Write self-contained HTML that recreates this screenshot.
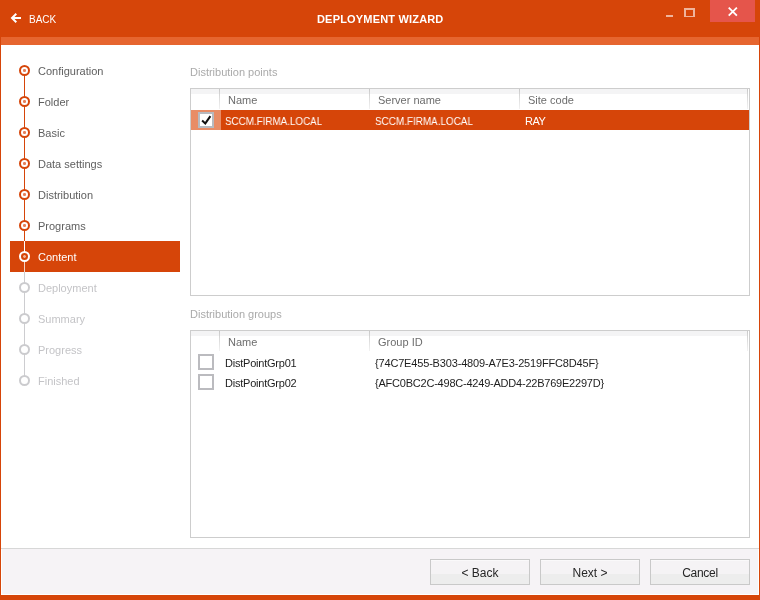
<!DOCTYPE html>
<html><head><meta charset="utf-8">
<style>
*{margin:0;padding:0;box-sizing:border-box}
html,body{width:760px;height:600px;overflow:hidden;background:#fff}
body{-webkit-font-smoothing:antialiased;position:relative;font-family:"Liberation Sans",sans-serif;font-size:11px}
.a{position:absolute;white-space:nowrap}
#frame{position:absolute;left:0;top:0;width:760px;height:600px;background:#D64509}
#white{position:absolute;left:1px;top:45px;width:758px;height:550px;background:#fff}
#band{position:absolute;left:1px;top:37px;width:758px;height:8px;background:#E6652F}
.t{position:absolute;white-space:nowrap;line-height:15px;will-change:transform}
.nav{color:#606060}
.dis{color:#C4C4C7}
.dot{position:absolute;left:19px;width:11px;height:11px;border-radius:50%;border:2px solid #D64509;background:#fff}
.dot{background:radial-gradient(circle at 50% 50%,#E6805A 0,#E6805A 1.2px,#fff 1.9px)}
.dot.d{border-color:#CBCBCE}
.dot.d{background:#fff}
.tbl{position:absolute;left:190px;width:560px;height:208px;border:1px solid #CDCDCD;background:#fff}
.hdr{position:absolute;left:0;top:0;width:557px;height:21px;background:linear-gradient(#F4F4F5 0,#F4F4F5 5px,#fff 5px)}
.sep{position:absolute;top:0;width:1px;height:20px;background:linear-gradient(#C9C9C9,#F2F2F2)}
.cb{position:absolute;width:16px;height:16px;border:2px solid #BBBBBF;background:#fff}
.btn{will-change:transform;position:absolute;top:559px;width:100px;height:26px;border:1px solid #C9C9C9;background:linear-gradient(#FAF9FA 0,#FAF9FA 1px,#F5F3F5 1px,#F5F3F5 14px,#EDEDED 14px);color:#262626;text-align:center;line-height:25px;padding-top:1px;font-size:12px}
</style></head><body>
<div id="frame"></div>
<div id="band"></div>
<div id="white"></div>
<!-- footer -->
<div class="a" style="left:1px;top:548px;width:758px;height:1px;background:#D7D7D7"></div>
<div class="a" style="left:2px;top:549px;width:756px;height:45px;background:#F6F3F6"></div>

<!-- header -->
<svg class="a" style="left:10px;top:12px" width="12" height="12" viewBox="0 0 12 12"><path d="M2 6H11M6.3 1.7L2 6L6.3 10.3" stroke="#fff" stroke-width="2" fill="none"/></svg>
<div class="t" style="left:29px;top:12px;color:#fff;font-size:10px">BACK</div>
<div class="t" style="left:317px;top:12px;color:#fff;font-weight:bold;letter-spacing:0.18px">DEPLOYMENT WIZARD</div>
<div class="a" style="left:666px;top:15px;width:7px;height:2px;background:rgba(255,255,255,.6)"></div>
<div class="a" style="left:684px;top:8px;width:11px;height:9px;border:2px solid rgba(255,255,255,.6);border-bottom-width:1px"></div>
<div class="a" style="left:710px;top:0;width:45px;height:22px;background:#E5554B"></div>
<svg class="a" style="left:727px;top:6px" width="12" height="11" viewBox="0 0 12 11"><path d="M1.7 1.6L9.9 9.7M9.9 1.6L1.7 9.7" stroke="#fff" stroke-width="1.8" fill="none"/></svg>

<!-- sidebar -->
<div class="a" style="left:10px;top:241px;width:170px;height:31px;background:#D64509"></div>
<div class="a" style="left:24px;top:70px;width:1px;height:186px;background:#D64509"></div>
<div class="a" style="left:24px;top:241px;width:1px;height:16px;background:#fff"></div>
<div class="a" style="left:24px;top:257px;width:1px;height:124px;background:#CDCDD0"></div>
<div class="a" style="left:24px;top:257px;width:1px;height:15px;background:#F6D2C2"></div>

<div class="dot" style="top:65px"></div>
<div class="dot" style="top:96px"></div>
<div class="dot" style="top:127px"></div>
<div class="dot" style="top:158px"></div>
<div class="dot" style="top:189px"></div>
<div class="dot" style="top:220px"></div>
<div class="dot" style="top:251px;border-color:#fff;background:radial-gradient(circle at 50% 50%,#F0B294 0,#F0B294 1px,#D64509 1.7px)"></div>
<div class="dot d" style="top:282px"></div>
<div class="dot d" style="top:313px"></div>
<div class="dot d" style="top:344px"></div>
<div class="dot d" style="top:375px"></div>

<div class="t nav" style="left:38px;top:64px">Configuration</div>
<div class="t nav" style="left:38px;top:95px">Folder</div>
<div class="t nav" style="left:38px;top:126px">Basic</div>
<div class="t nav" style="left:38px;top:157px">Data settings</div>
<div class="t nav" style="left:38px;top:188px">Distribution</div>
<div class="t nav" style="left:38px;top:219px">Programs</div>
<div class="t" style="left:38px;top:250px;color:#fff">Content</div>
<div class="t dis" style="left:38px;top:281px">Deployment</div>
<div class="t dis" style="left:38px;top:312px">Summary</div>
<div class="t dis" style="left:38px;top:343px">Progress</div>
<div class="t dis" style="left:38px;top:374px">Finished</div>

<!-- distribution points -->
<div class="t" style="left:190px;top:65px;color:#AAAAAA">Distribution points</div>
<div class="tbl" style="top:88px">
  <div class="hdr"></div>
  <div class="sep" style="left:28px"></div>
  <div class="sep" style="left:178px"></div>
  <div class="sep" style="left:328px"></div>
  <div class="sep" style="left:556px"></div>
  <div class="t" style="left:37px;top:4px;color:#6D6D6D">Name</div>
  <div class="t" style="left:187px;top:4px;color:#6D6D6D">Server name</div>
  <div class="t" style="left:337px;top:4px;color:#6D6D6D">Site code</div>
  <div class="a" style="left:0;top:21px;width:30px;height:20px;background:#E88C66"></div>
  <div class="a" style="left:30px;top:21px;width:528px;height:20px;background:#D64509"></div>
  <div class="cb" style="left:7px;top:23px;border-color:#B7BAC0"></div>
  <svg class="a" style="left:7px;top:23px" width="16" height="16" viewBox="0 0 16 16"><path d="M4.1 8.4L7.3 11.4L12.4 4.2" stroke="#111" stroke-width="2" fill="none"/></svg>
  <div class="t" style="left:34px;top:25px;color:#fff;transform:scaleX(0.893);transform-origin:0 0">SCCM.FIRMA.LOCAL</div>
  <div class="t" style="left:184px;top:25px;color:#fff;transform:scaleX(0.9);transform-origin:0 0">SCCM.FIRMA.LOCAL</div>
  <div class="t" style="left:334px;top:25px;color:#fff;letter-spacing:-0.5px">RAY</div>
</div>

<!-- distribution groups -->
<div class="t" style="left:190px;top:307px;color:#AAAAAA">Distribution groups</div>
<div class="tbl" style="top:330px">
  <div class="hdr"></div>
  <div class="sep" style="left:28px"></div>
  <div class="sep" style="left:178px"></div>
  <div class="sep" style="left:556px"></div>
  <div class="t" style="left:37px;top:4px;color:#6D6D6D">Name</div>
  <div class="t" style="left:187px;top:4px;color:#6D6D6D">Group ID</div>
  <div class="cb" style="left:7px;top:23px"></div>
  <div class="cb" style="left:7px;top:43px"></div>
  <div class="t" style="left:34px;top:25px;color:#1E1E1E;letter-spacing:-0.22px">DistPointGrp01</div>
  <div class="t" style="left:184px;top:25px;color:#1E1E1E;letter-spacing:-0.17px">{74C7E455-B303-4809-A7E3-2519FFC8D45F}</div>
  <div class="t" style="left:34px;top:45px;color:#1E1E1E;letter-spacing:-0.22px">DistPointGrp02</div>
  <div class="t" style="left:184px;top:45px;color:#1E1E1E;letter-spacing:-0.22px">{AFC0BC2C-498C-4249-ADD4-22B769E2297D}</div>
</div>

<!-- buttons -->
<div class="btn" style="left:430px">&lt; Back</div>
<div class="btn" style="left:540px">Next &gt;</div>
<div class="btn" style="left:650px;letter-spacing:-0.3px">Cancel</div>
</body></html>
